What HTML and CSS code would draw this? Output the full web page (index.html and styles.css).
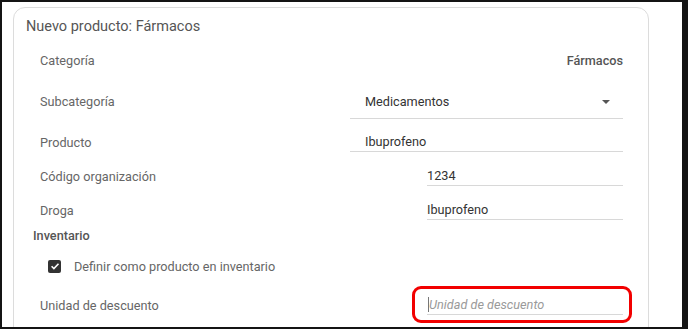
FILE: index.html
```html
<!DOCTYPE html>
<html lang="es">
<head>
  <meta charset="UTF-8">
  <title>Nuevo producto: Fármacos</title>
  <link rel="stylesheet" href="styles.css">
</head>
<body>
  <div class="frame">
    <div class="card">
      <h2 class="card-title">Nuevo producto: Fármacos</h2>
      <div class="form">
        <div class="row row-lg">
          <span class="label">Categoría</span>
          <span class="static-value">Fármacos</span>
        </div>
        <div class="row row-lg">
          <span class="label">Subcategoría</span>
          <div class="field field-wide field-select">
            <span class="value">Medicamentos</span>
            <svg class="caret" viewBox="0 0 8 4" width="8" height="4">
              <path d="M0 0h8L4 4z" />
            </svg>
          </div>
        </div>
        <div class="row row-lg">
          <span class="label">Producto</span>
          <div class="field field-wide">
            <span class="value">Ibuprofeno</span>
          </div>
        </div>
        <div class="group">
          <div class="row">
            <span class="label">Código organización</span>
            <div class="field field-small">
              <span class="value">1234</span>
            </div>
          </div>
          <div class="row">
            <span class="label">Droga</span>
            <div class="field field-small">
              <span class="value">Ibuprofeno</span>
            </div>
          </div>
        </div>
        <div class="section-title">Inventario</div>
        <div class="row check-row">
          <span class="checkbox">
            <svg viewBox="0 0 12 12" width="12" height="12">
              <path d="M2.6 6.2l2.3 2.3 4.6-4.8" />
            </svg>
          </span>
          <span class="check-label">Definir como producto en inventario</span>
        </div>
        <div class="row row-unit">
          <span class="label">Unidad de descuento</span>
          <div class="field field-small field-focus">
            <span class="cursor"></span>
            <span class="placeholder">Unidad de descuento</span>
            <span class="highlight"></span>
          </div>
        </div>
      </div>
    </div>
  </div>
</body>
</html>
```

FILE: styles.css
```css
html, body {
  margin: 0;
  padding: 0;
}
body {
  background-color: #141414;
  font-family: Roboto, "Liberation Sans", sans-serif;
  font-size: 12.7px;
  color: #333;
}
.frame {
  box-sizing: border-box;
  height: 329px;
  border-style: solid;
  border-color: #141414;
  border-width: 2px 6px 2px 2px;
  background-color: #fff;
  overflow: hidden;
  padding: 5px 0 0 11px;
}
.card {
  box-sizing: border-box;
  width: 636px;
  height: 400px;
  border: 1px solid #dcdcdc;
  border-radius: 12px;
  padding: 9px 25px 0 12px;
}
.card-title {
  margin: 0 0 3px;
  font-size: 14.5px;
  font-weight: 400;
  line-height: 20px;
  color: #555;
}
.form {
  display: flex;
  flex-direction: column;
}
.row {
  display: flex;
  align-items: center;
  justify-content: space-between;
  height: 34px;
  padding-left: 14px;
}
.row-lg {
  height: 41px;
}
.group {
  margin-top: -4px;
}
.label {
  color: #666;
}
.static-value {
  font-weight: 500;
  color: #555;
}
.field {
  position: relative;
  box-sizing: border-box;
  display: flex;
  align-items: center;
  line-height: 16px;
  padding: 1px 0;
  border-bottom: 1px solid #d8d8d8;
}
.field-wide {
  width: 273px;
  padding-left: 15px;
}
.field-small {
  width: 196px;
}
.field-select {
  padding-top: 9px;
  padding-bottom: 8px;
  justify-content: space-between;
  padding-right: 13px;
}
.caret {
  fill: #555;
}
.section-title {
  height: 18px;
  line-height: 18px;
  padding-left: 7px;
  font-weight: 500;
  color: #555;
}
.check-row {
  height: 42px;
  justify-content: flex-start;
  padding-left: 22px;
}
.checkbox {
  display: flex;
  align-items: center;
  justify-content: center;
  width: 13px;
  height: 13px;
  border-radius: 2px;
  background-color: #333;
}
.checkbox path {
  fill: none;
  stroke: #fff;
  stroke-width: 1.6;
}
.check-label {
  margin-left: 13px;
  color: #666;
}
.row-unit {
  height: 36px;
}
.field-focus {
  padding-left: 1px;
}
.cursor {
  width: 1px;
  height: 15px;
  background-color: #777;
}
.placeholder {
  font-style: italic;
  color: #9a9a9a;
}
.highlight {
  position: absolute;
  left: -15px;
  right: -9px;
  top: -10px;
  bottom: -9px;
  border: 3px solid #f20000;
  border-radius: 9px;
}
```
